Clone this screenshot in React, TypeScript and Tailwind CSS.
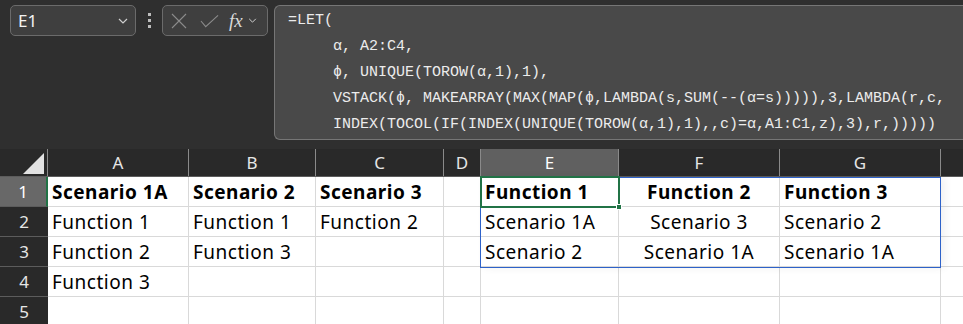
import React from 'react';

const cols = [
  { key: 'A', w: 'w-[141px]' },
  { key: 'B', w: 'w-[127px]' },
  { key: 'C', w: 'w-[128px]' },
  { key: 'D', w: 'w-[37px]' },
  { key: 'E', w: 'w-[138px]' },
  { key: 'F', w: 'w-[161px]' },
  { key: 'G', w: 'w-[161px]' },
  { key: '', w: 'flex-1' },
];

type Cell = { text: string; bold?: boolean; center?: boolean };

const rows: Cell[][] = [
  [
    { text: 'Scenario 1A', bold: true },
    { text: 'Scenario 2', bold: true },
    { text: 'Scenario 3', bold: true },
    { text: '' },
    { text: 'Function 1', bold: true },
    { text: 'Function 2', bold: true, center: true },
    { text: 'Function 3', bold: true },
    { text: '' },
  ],
  [
    { text: 'Function 1' },
    { text: 'Function 1' },
    { text: 'Function 2' },
    { text: '' },
    { text: 'Scenario 1A' },
    { text: 'Scenario 3', center: true },
    { text: 'Scenario 2' },
    { text: '' },
  ],
  [
    { text: 'Function 2' },
    { text: 'Function 3' },
    { text: '' },
    { text: '' },
    { text: 'Scenario 2' },
    { text: 'Scenario 1A', center: true },
    { text: 'Scenario 1A' },
    { text: '' },
  ],
  [{ text: 'Function 3' }, ...Array.from({ length: 7 }, () => ({ text: '' }))],
  Array.from({ length: 8 }, () => ({ text: '' })),
];

const formula = [
  '=LET(',
  '     α, A2:C4,',
  '     ϕ, UNIQUE(TOROW(α,1),1),',
  '     VSTACK(ϕ, MAKEARRAY(MAX(MAP(ϕ,LAMBDA(s,SUM(--(α=s))))),3,LAMBDA(r,c,',
  '     INDEX(TOCOL(IF(INDEX(UNIQUE(TOROW(α,1),1),,c)=α,A1:C1,z),3),r,)))))',
];

const Chevron: React.FC<{ className?: string }> = ({ className }) => (
  <svg viewBox="0 0 10 6" className={className} fill="none" stroke="currentColor" strokeWidth="1.2">
    <path d="M1 1l4 4 4-4" />
  </svg>
);

const App: React.FC = () => {
  return (
    <div className="w-[963px] h-[324px] overflow-hidden bg-[#2f2f2f] font-['Noto_Sans',sans-serif]">
      {/* formula bar */}
      <div className="flex h-[149px] pt-[5px] pl-[10px]">
        <div className="flex items-center w-[126px] h-[31px] rounded-[5px] border border-[#6b6b6b] bg-[#3f3f3f] pl-[7px] pr-[7px]">
          <span className="flex-1 text-[17px] text-[#f2f2f2] leading-none">E1</span>
          <Chevron className="w-[10px] h-[6px] text-[#cfcfcf]" />
        </div>
        <div className="flex flex-col items-center justify-center gap-[3px] w-[26px] h-[31px]">
          <span className="w-[3px] h-[3px] bg-[#bdbdbd]" />
          <span className="w-[3px] h-[3px] bg-[#bdbdbd]" />
          <span className="w-[3px] h-[3px] bg-[#bdbdbd]" />
        </div>
        <div className="flex items-center w-[106px] h-[31px] rounded-[5px] border border-[#6b6b6b] bg-[#3f3f3f] pl-[8px]">
          <svg viewBox="0 0 16 16" className="w-[16px] h-[16px] text-[#8c8c8c]" fill="none" stroke="currentColor" strokeWidth="1.1">
            <path d="M1 1l14 14M15 1L1 15" />
          </svg>
          <svg viewBox="0 0 20 14" className="ml-[13px] w-[19px] h-[14px] text-[#8c8c8c]" fill="none" stroke="currentColor" strokeWidth="1.1">
            <path d="M1 7l5 6L19 1" />
          </svg>
          <span className="ml-[10px] font-['Liberation_Serif',serif] italic text-[19px] leading-none text-[#d9d9d9]">fx</span>
          <Chevron className="ml-[5px] w-[9px] h-[5px] text-[#cfcfcf]" />
        </div>
        <div className="ml-[6px] flex-1 h-[135px] rounded-l-[6px] border border-r-0 border-[#767676] bg-[#494949] pt-[2px] pl-[13px]">
          {formula.map((l, i) => (
            <div key={i} className="font-['Liberation_Mono',monospace] text-[15px] leading-[26px] text-[#ececec] whitespace-pre">
              {l}
            </div>
          ))}
        </div>
      </div>

      {/* grid */}
      <div className="relative">
        <div className="flex h-[28px] bg-[#292929] border-b border-[#5c5c5c]">
          <div className="relative w-[48px] border-r border-[#8a8a8a]">
            <svg viewBox="0 0 21 21" className="absolute left-[23px] top-[4px] w-[21px] h-[21px]">
              <path d="M21 0V21H0Z" fill="#e2e2e2" />
            </svg>
          </div>
          {cols.map((c) => (
            <div
              key={c.key || 'x'}
              className={`${c.w} flex items-center justify-center text-[17px] ${
                c.key === 'E' ? 'bg-[#606060] text-white' : 'text-[#e6e6e6]'
              } ${c.key ? 'border-r border-[#8a8a8a]' : ''}`}
            >
              {c.key}
            </div>
          ))}
        </div>
        {rows.map((r, ri) => (
          <div key={ri} className="flex h-[30px]">
            <div
              className={`w-[48px] flex items-center justify-center text-[17px] border-b border-[#5c5c5c] ${
                ri === 0 ? 'bg-[#686868] text-white border-r-2 border-r-[#217346]' : 'bg-[#292929] text-[#e6e6e6]'
              }`}
            >
              {ri + 1}
            </div>
            {r.map((cell, ci) => (
              <div
                key={ci}
                className={`${cols[ci].w} flex items-center bg-white border-b border-[#d9d9d9] ${
                  cols[ci].key ? 'border-r' : ''
                } border-r-[#d9d9d9] px-[4px] pt-[1px] text-[19px] tracking-[0.5px] text-black whitespace-nowrap ${
                  cell.center ? 'justify-center' : ''
                } ${cell.bold ? 'font-bold' : ''}`}
              >
                {cell.text}
              </div>
            ))}
          </div>
        ))}

        {/* spill range */}
        <div className="absolute left-[480px] top-[28px] w-[461px] h-[91px] border border-[#2e62c9] shadow-[4px_0_8px_rgba(0,0,0,0.06)]" />
        {/* active cell */}
        <div className="absolute left-[480px] top-[27px] w-[140px] h-[32px] border-2 border-[#217346]">
          <div className="absolute -right-[4px] -bottom-[4px] w-[6px] h-[6px] bg-[#217346] border border-white" />
        </div>
      </div>
    </div>
  );
};

export default App;
